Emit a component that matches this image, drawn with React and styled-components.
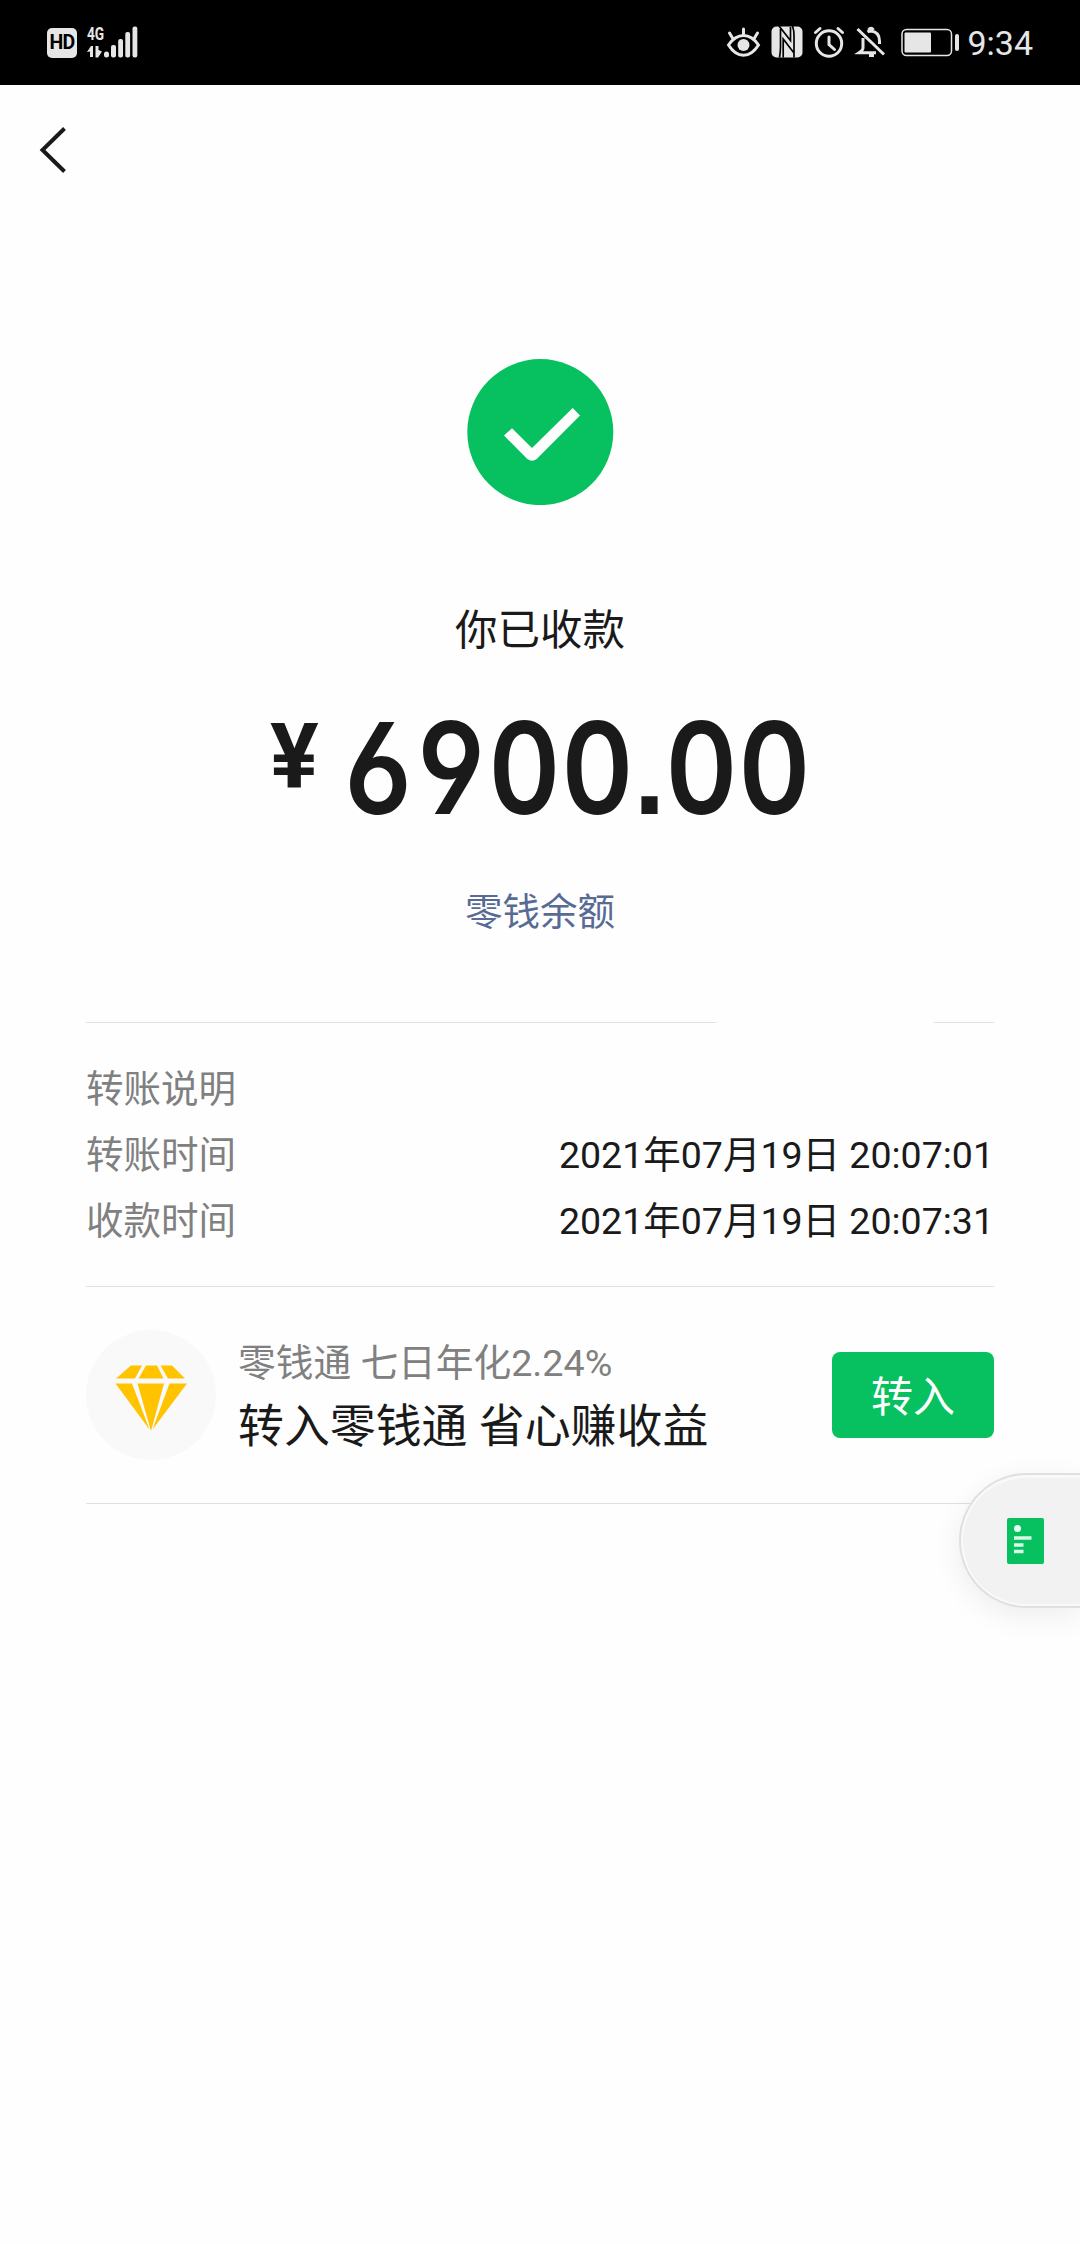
import React from 'react';
import styled, { createGlobalStyle } from 'styled-components';

const GlobalStyle = createGlobalStyle`
  * {
    box-sizing: border-box;
  }

  body {
    margin: 0;
    background: #fefefe;
    color: #1a1a1a;
    font-family: Roboto, 'Noto Sans CJK SC', sans-serif;
  }
`;

const Screen = styled.div`
  position: relative;
  width: 1080px;
  height: 2244px;
  overflow: hidden;
  background: #fefefe;
`;

const StatusBar = styled.header`
  display: flex;
  align-items: center;
  justify-content: space-between;
  height: 85px;
  padding: 0 47px;
  background: #000;
  color: #e6e6e6;
`;

const StatusGroup = styled.div`
  display: flex;
  align-items: center;
  height: 85px;
`;

const HdBadge = styled.div`
  width: 30px;
  height: 30px;
  margin-right: 10px;
  border-radius: 5px;
  background: #e6e6e6;
  color: #000;
  font-size: 19.5px;
  font-weight: 700;
  line-height: 30px;
  text-align: center;
  letter-spacing: -0.8px;
`;

const SignalBox = styled.div`
  display: flex;
  height: 34px;
`;

const NetworkType = styled.div`
  display: flex;
  flex-direction: column;
  width: 17px;
`;

const NetworkLabel = styled.span`
  width: 25px;
  height: 20px;
  font-size: 19px;
  font-weight: 700;
  line-height: 16px;
  transform: scaleX(0.72);
  transform-origin: left;
`;

const Clock = styled.span`
  margin-left: 7px;
  font-size: 34px;
  line-height: 40px;
`;

const NavBar = styled.nav`
  display: flex;
  align-items: center;
  height: 130px;
  padding-left: 38px;
`;

const BackButton = styled.button`
  display: flex;
  padding: 0;
  border: none;
  background: none;
  color: #1a1a1a;
`;

const Result = styled.section`
  display: flex;
  flex-direction: column;
  align-items: center;
  padding-top: 144px;
`;

const ResultTitle = styled.h1`
  margin: 96px 0 0;
  font-size: 42.5px;
  font-weight: 400;
  line-height: 60px;
`;

const Amount = styled.div`
  display: flex;
  align-items: flex-start;
  width: 540px;
  height: 152px;
  margin-top: 31px;
`;

const Currency = styled.span`
  flex: none;
  width: 72px;
  font-size: 91px;
  font-weight: 700;
  line-height: 130px;
`;

const Digits = styled.span`
  flex: none;
  font-family: Inter, Roboto, sans-serif;
  font-size: 127px;
  font-weight: 600;
  font-feature-settings: 'tnum', 'ss01', 'ss07', 'cv05', 'cv06';
  line-height: 152px;
  letter-spacing: 0.9px;
  transform: scaleX(0.88);
  transform-origin: left;
`;

const BalanceLink = styled.a`
  margin-top: 42px;
  color: #576b95;
  font-size: 37.5px;
  line-height: 52px;
`;

const Details = styled.main`
  padding: 84px 86px 0;
`;

const Divider = styled.div`
  height: 1px;
  background: ${({ $broken }) =>
    $broken
      ? 'linear-gradient(90deg, #e0e0e0 628px, transparent 632px 846px, #e0e0e0 850px)'
      : '#e0e0e0'};
`;

const Rows = styled.dl`
  display: flex;
  flex-direction: column;
  height: 263px;
  margin: 0;
  padding-top: 33px;
`;

const Row = styled.div`
  display: flex;
  justify-content: space-between;
  height: 66px;
  font-size: 37.5px;
  line-height: 66px;

  dt {
    color: #808080;
  }

  dd {
    margin: 0;
  }
`;

const Promo = styled.section`
  display: flex;
  align-items: center;
  height: 216px;
`;

const PromoIcon = styled.div`
  display: flex;
  align-items: center;
  justify-content: center;
  width: 130px;
  height: 130px;
  padding-top: 5px;
  border-radius: 50%;
  background: #f9f9f9;
`;

const PromoText = styled.div`
  flex: 1;
  margin-left: 22px;
  padding-top: 6px;
`;

const PromoRate = styled.div`
  color: #808080;
  font-size: 37.7px;
  line-height: 56px;
`;

const PromoTitle = styled.div`
  font-size: 45.9px;
  line-height: 70px;
`;

const TransferButton = styled.button`
  width: 162px;
  height: 86px;
  padding: 5px 0 0;
  border: none;
  border-radius: 8px;
  background: #07c160;
  color: #fff;
  font-family: inherit;
  font-size: 42px;
  line-height: 81px;
`;

const FloatingTab = styled.aside`
  position: absolute;
  top: 1473px;
  right: 0;
  display: flex;
  align-items: center;
  width: 121px;
  height: 135px;
  padding-left: 46px;
  border: 2px solid #e0e0e0;
  border-right: none;
  border-radius: 68px 0 0 68px;
  background: #f2f2f2;
  box-shadow: inset 2px 0 0 #fafafa, inset 0 3px 1px #f9f9f9, inset 0 -2px 0 #f9f9f9,
    0 8px 30px rgba(0, 0, 0, 0.07);
`;

const DataArrows = () => (
  <svg width="15" height="12" viewBox="88 46 15 12" fill="#e6e6e6">
    <path d="M88 52 L92 46 H94 V57 H91 V51.5 Z" />
    <path d="M96.5 46 H99.5 V50 L103 51.5 L99 57.5 H96.5 Z" />
  </svg>
);

const SignalBars = () => (
  <svg width="34" height="34" viewBox="104.5 26 34 34" fill="#e6e6e6">
    <rect x="104.5" y="51.5" width="5" height="6" rx="2.5" />
    <rect x="111.5" y="45" width="5" height="12.5" rx="2" />
    <rect x="118.7" y="39" width="4.8" height="18.5" rx="2" />
    <rect x="125.8" y="32" width="4.8" height="25.5" rx="2" />
    <rect x="133" y="26.5" width="4.8" height="31" rx="2" />
  </svg>
);

const StatusIcons = () => (
  <svg width="234" height="34" viewBox="726 26 234 34" fill="none" stroke="#e6e6e6" strokeWidth="3">
    {/* eye comfort */}
    <path d="M728.5 45 Q735 35.5 743.5 35.5 T758.5 45 Q752 55.3 743.5 55.3 T728.5 45 Z" />
    <path d="M743.5 29 V34 M729.5 33 L732.5 38 M757.5 33 L754.5 38" strokeLinecap="round" />
    <circle cx="743.5" cy="45" r="6" fill="#e6e6e6" stroke="none" />
    {/* nfc */}
    <rect x="771.5" y="26.5" width="31" height="31" rx="5" fill="#e6e6e6" stroke="none" />
    <path
      d="M779 26 L790.5 40.5 V27 M779.5 57.5 Q780.5 52 780.5 47 V29 M783.2 57.5 V39 L794 53 M794 57.5 V36 Q794 30 792.5 26"
      stroke="#000"
      strokeWidth="1.7"
    />
    {/* alarm */}
    <circle cx="829" cy="43.5" r="12.7" />
    <path d="M829 37 V44.5 L834.5 49.5 M815.5 32.5 L820 28.5 M842.5 32.5 L838 28.5" strokeLinecap="round" />
    {/* muted bell */}
    <path d="M863 38 V48 Q863 50 859 52.7 H876 M867.5 32 Q869 31 871 31 Q879.5 32 879.5 41 V44 M857.5 29 L884 54.5" />
    <path d="M868.5 30 Q871 26.5 873.5 30 M869 55.5 H874" />
    {/* battery */}
    <rect x="902" y="29.5" width="49.5" height="26" rx="4.5" strokeWidth="1.5" />
    <rect x="904.5" y="32.5" width="26.5" height="20" rx="1" fill="#e6e6e6" stroke="none" />
    <rect x="955" y="34" width="4" height="17" rx="2" fill="#e6e6e6" stroke="none" />
  </svg>
);

const BackIcon = () => (
  <svg width="30" height="50" viewBox="38 125 30 50" fill="none" stroke="#1a1a1a" strokeWidth="4">
    <path d="M64.5 128.5 L42.5 150 L64.5 171.5" />
  </svg>
);

const SuccessIcon = () => (
  <svg width="148" height="146" viewBox="466 358.7 148 146">
    <circle cx="540.3" cy="431.8" r="73" fill="#07c160" />
    <path
      d="M504 435.3 L512 428 L532 447.7 L572.7 407.7 L580 415.3 L536.7 458.7 Q532 462.3 527.3 458.7 Z"
      fill="#fff"
    />
  </svg>
);

const DiamondIcon = () => (
  <svg width="74" height="68" viewBox="114 1364 74 68" fill="#ffc300">
    <path d="M131 1365.5 H142 L135 1378.500 H116 Z" />
    <path d="M146 1365.5 H157 L163.5 1378.5 H138.5 Z" />
    <path d="M160.5 1365.5 H172 L185 1378.5 H168 Z" />
    <path d="M115.5 1383.5 H132 L149.5 1429.5 Z" />
    <path d="M137.5 1383.5 H164 L151 1431 Z" />
    <path d="M169.5 1383.5 H187 L152.5 1429.5 Z" />
  </svg>
);

const BillIcon = () => (
  <svg width="37" height="46" viewBox="0 0 37 46">
    <rect width="37" height="46" rx="2" fill="#07c160" />
    <circle cx="10.5" cy="10.5" r="3.5" fill="#eafff2" />
    <path d="M7 20 H24.5 M7 27 H16.5 M7 33.5 H16.5" stroke="#d9f8e6" strokeWidth="3.6" />
  </svg>
);

const rows = [
  { label: '转账说明', value: '' },
  { label: '转账时间', value: '2021年07月19日 20:07:01' },
  { label: '收款时间', value: '2021年07月19日 20:07:31' },
];

const App = () => (
  <Screen>
    <GlobalStyle />
    <StatusBar>
      <StatusGroup>
        <HdBadge>HD</HdBadge>
        <SignalBox>
          <NetworkType>
            <NetworkLabel>4G</NetworkLabel>
            <DataArrows />
          </NetworkType>
          <SignalBars />
        </SignalBox>
      </StatusGroup>
      <StatusGroup>
        <StatusIcons />
        <Clock>9:34</Clock>
      </StatusGroup>
    </StatusBar>

    <NavBar>
      <BackButton>
        <BackIcon />
      </BackButton>
    </NavBar>

    <Result>
      <SuccessIcon />
      <ResultTitle>你已收款</ResultTitle>
      <Amount>
        <Currency>¥</Currency>
        <Digits>6900.00</Digits>
      </Amount>
      <BalanceLink>零钱余额</BalanceLink>
    </Result>

    <Details>
      <Divider $broken />
      <Rows>
        {rows.map(({ label, value }) => (
          <Row key={label}>
            <dt>{label}</dt>
            <dd>{value}</dd>
          </Row>
        ))}
      </Rows>
      <Divider />
      <Promo>
        <PromoIcon>
          <DiamondIcon />
        </PromoIcon>
        <PromoText>
          <PromoRate>零钱通 七日年化2.24%</PromoRate>
          <PromoTitle>转入零钱通 省心赚收益</PromoTitle>
        </PromoText>
        <TransferButton>转入</TransferButton>
      </Promo>
      <Divider />
    </Details>

    {/* Floating bill shortcut docked to the right edge */}
    <FloatingTab>
      <BillIcon />
    </FloatingTab>
  </Screen>
);

export default App;
